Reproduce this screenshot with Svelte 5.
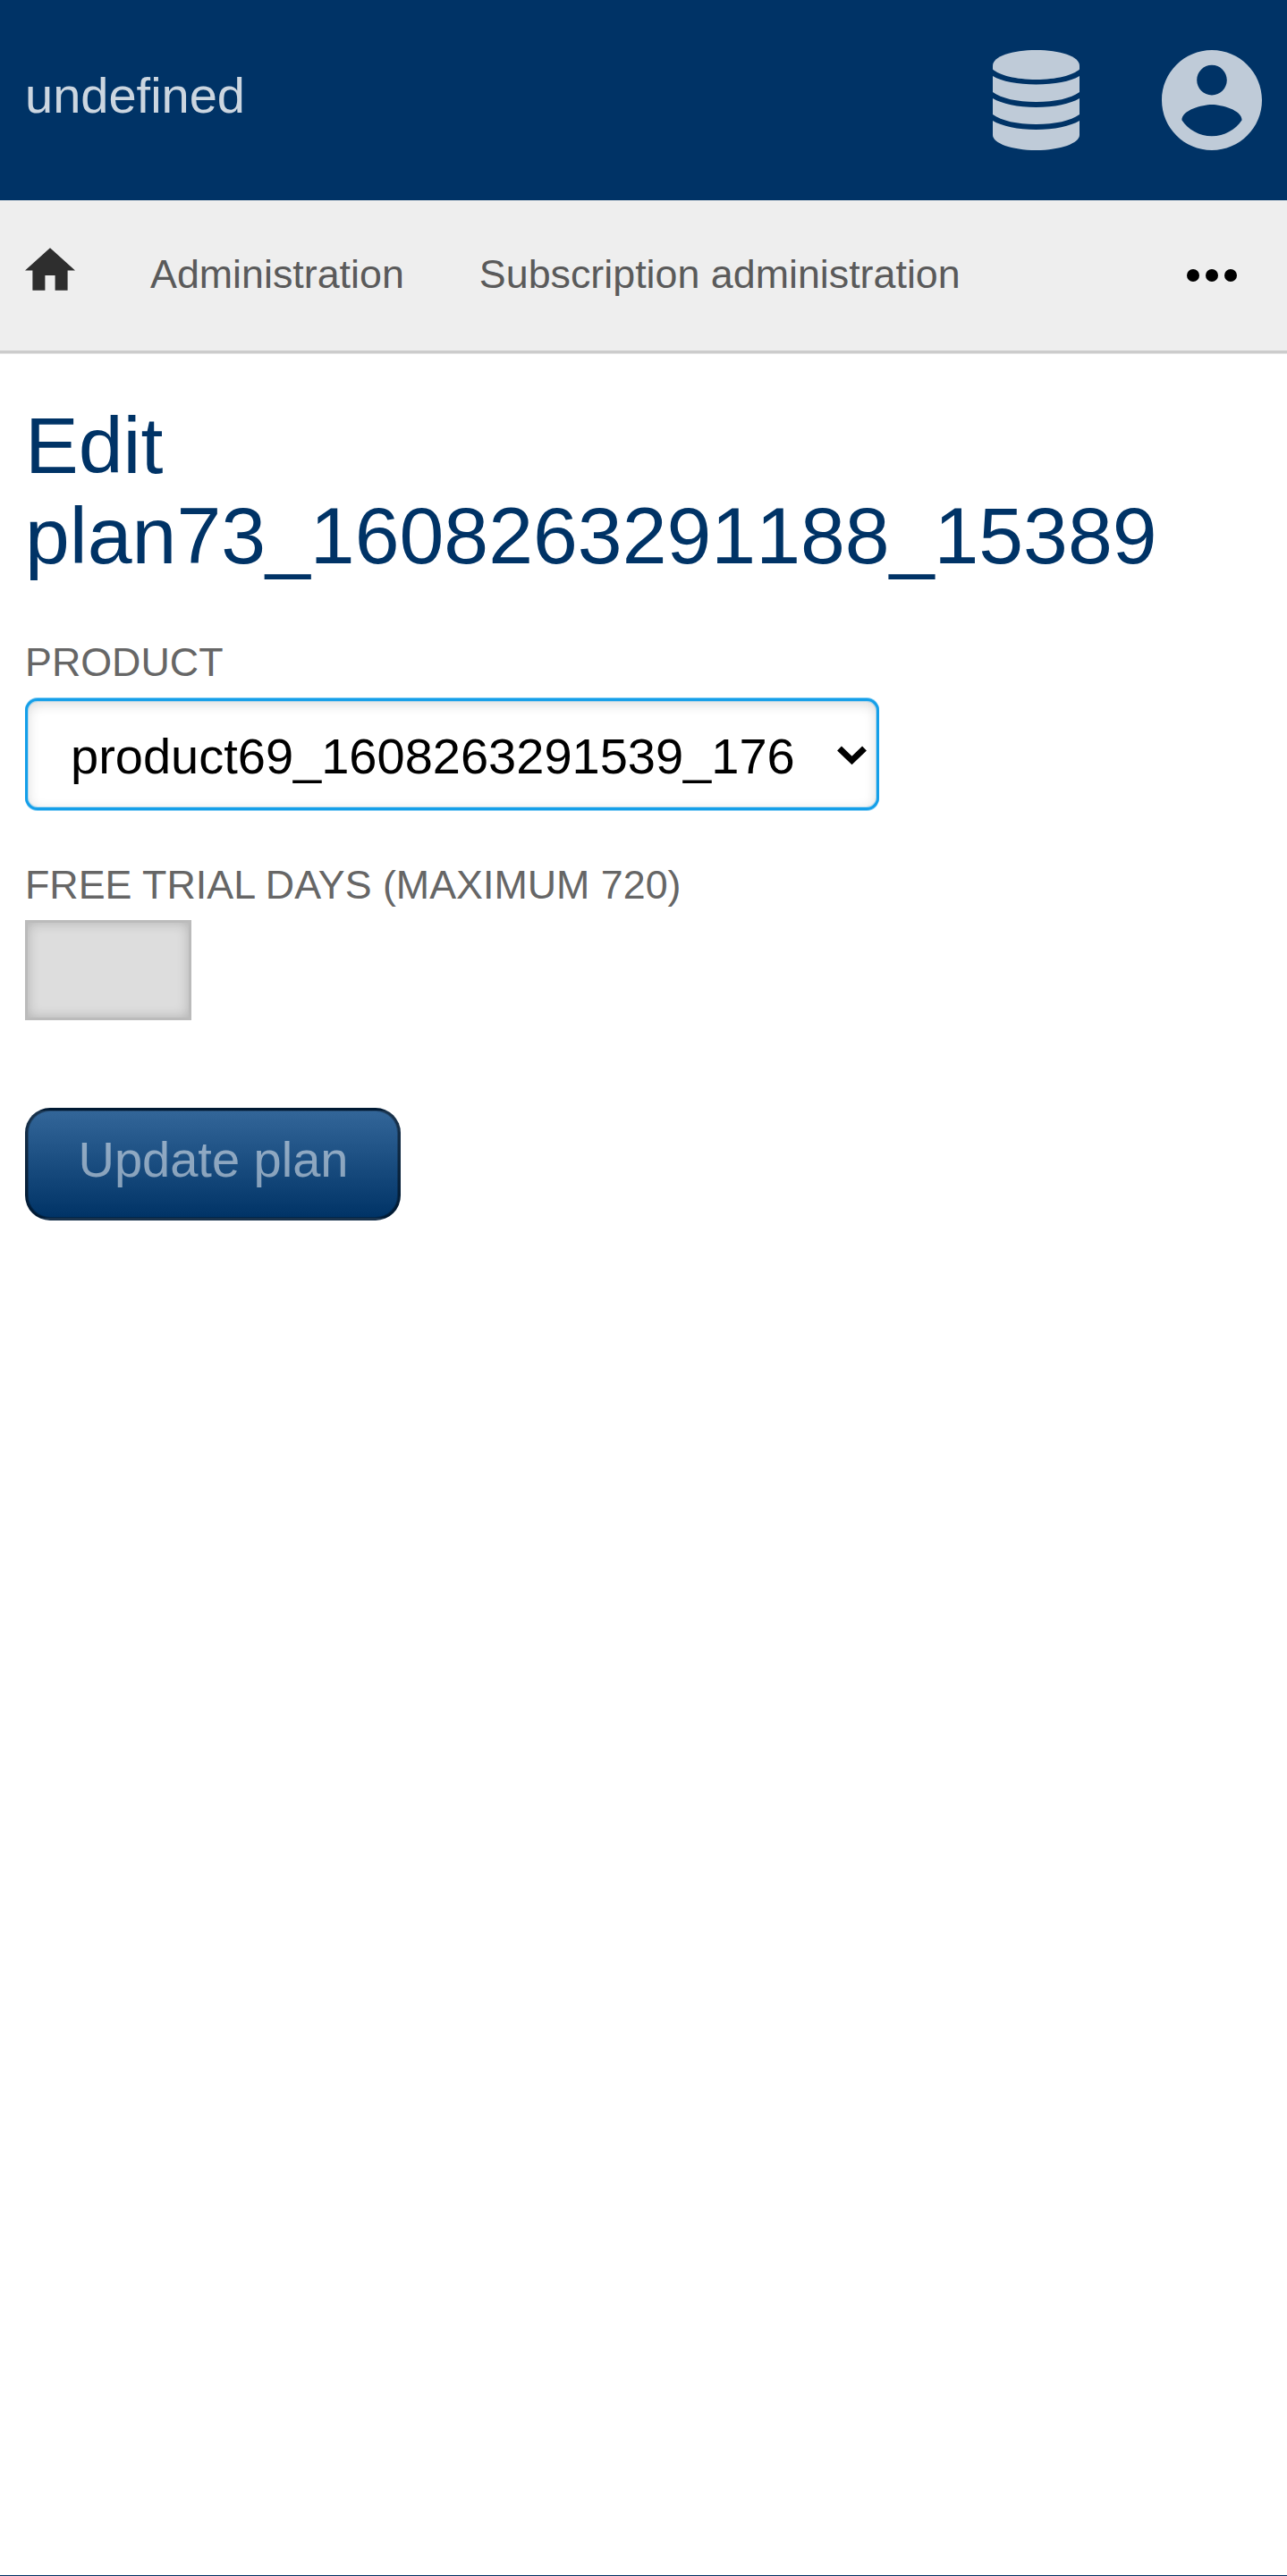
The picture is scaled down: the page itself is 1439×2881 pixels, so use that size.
<script>
  const crumbs = ['Administration', 'Subscription administration'];
  let product = $state('product69_1608263291539_176');
</script>

<div class="page">
  <header>
    <span class="brand">undefined</span>
    <div class="tools">
      <svg class="db" viewBox="0 0 97 112" aria-label="Database">
        <path d="M0 17.500C0 7 22 0 48.500 0S97 7 97 17.500V21.500C90 28 71 33 48.500 33S7 28 0 21.500Z" />
        <path d="M0 29C10 35 28 38.500 48.500 38.500S87 35 97 29V47C87 54 70 58 48.500 58S10 54 0 47Z" />
        <path d="M0 54C10 60 28 64 48.500 64S87 60 97 54V72C87 79 70 83 48.500 83S10 79 0 72Z" />
        <path d="M0 79C10 85 28 89 48.500 89S87 85 97 79V95C97 104 76 112 48.500 112S0 104 0 95Z" />
      </svg>
      <svg class="user" viewBox="2 2 20 20" aria-label="Account">
        <path d="M12 2C6.480 2 2 6.480 2 12s4.480 10 10 10 10-4.480 10-10S17.520 2 12 2zm0 3c1.660 0 3 1.340 3 3s-1.340 3-3 3-3-1.340-3-3 1.340-3 3-3zm0 14.200c-2.500 0-4.710-1.280-6-3.220.030-1.990 4-3.080 6-3.080 1.990 0 5.970 1.090 6 3.080-1.290 1.940-3.500 3.220-6 3.220z" />
      </svg>
    </div>
  </header>

  <nav>
    <svg class="home" viewBox="2 3 20 17" aria-label="Home">
      <path d="M10 20v-6h4v6h5v-8h3L12 3 2 12h3v8z" />
    </svg>
    {#each crumbs as crumb}
      <span class="crumb">{crumb}</span>
    {/each}
    <svg class="more" viewBox="0 0 56 14" aria-label="More">
      <circle cx="7" cy="7" r="7" />
      <circle cx="28" cy="7" r="7" />
      <circle cx="49" cy="7" r="7" />
    </svg>
  </nav>

  <main>
    <h1>Edit plan73_1608263291188_15389</h1>
    <label for="product">Product</label>
    <div class="select">
      <select id="product" bind:value={product}>
        <option>product69_1608263291539_176</option>
      </select>
      <svg class="caret" viewBox="0 0 33 22"><path d="M2.500 3 16.500 16.500 30.500 3" /></svg>
    </div>
    <label for="trial">Free trial days (maximum 720)</label>
    <input id="trial" disabled />
    <button disabled>Update plan</button>
  </main>
  <footer></footer>
</div>

<style>
  .page {
    display: flex;
    flex-direction: column;
    height: 2881px;
    overflow: hidden;
    background: #fff;
    font-family: "Liberation Sans", Arial, sans-serif;
    font-size: 56px;
  }
  svg { display: block; flex: none; }
  header {
    display: flex;
    justify-content: space-between;
    align-items: center;
    box-sizing: border-box;
    height: 224px;
    padding: 0 28px;
    background: #036;
    color: rgba(255, 255, 255, 0.8);
    flex: none;
  }
  .brand { padding-bottom: 11px; }
  .tools { display: flex; gap: 92px; fill: rgba(255, 255, 255, 0.75); }
  .db { width: 97px; height: 112px; }
  .user { width: 112px; height: 112px; }
  nav {
    display: flex;
    align-items: center;
    box-sizing: border-box;
    height: 171px;
    padding: 0 56px 0 28px;
    border-bottom: 3px solid #ccc;
    background: #eee;
    box-shadow: 0 1px #e6e6e6;
    color: #5a5a5a;
    font-size: 44.8px;
    flex: none;
  }
  .home { width: 56px; height: 48px; margin-bottom: 14px; fill: #2e2e2e; }
  .crumb { margin-left: 84px; padding-bottom: 3px; }
  .more { width: 56px; height: 14px; margin-left: auto; }
  main { display: flex; flex-direction: column; align-items: flex-start; padding: 53px 28px 0; flex: 1; }
  h1 {
    margin: 0 0 65px;
    color: #036;
    font-size: 89.6px;
    font-weight: 400;
    font-kerning: none;
    line-height: 101px;
  }
  label {
    color: #666;
    font-size: 44.8px;
    line-height: 51px;
    text-transform: uppercase;
  }
  .select { position: relative; margin: 15px 0 58px; }
  select {
    display: block;
    appearance: none;
    box-sizing: border-box;
    width: 955px;
    height: 125px;
    padding: 3px 0 0 48px;
    border: 3px solid #149fe9;
    border-radius: 14px;
    background: #fff;
    box-shadow:
      0 -1px rgba(20, 159, 233, 0.5),
      0 1px rgba(20, 159, 233, 0.5),
      inset 0 0 0 1px rgba(20, 159, 233, 0.25),
      inset 0 3.500px 14px rgba(0, 0, 0, 0.15);
    color: #000;
    font: 56px "Liberation Sans", Arial, sans-serif;
  }
  .caret {
    position: absolute;
    right: 14px;
    top: 53px;
    width: 33px;
    height: 22px;
    fill: none;
    stroke: #000;
    stroke-width: 7;
    pointer-events: none;
  }
  input {
    box-sizing: border-box;
    width: 186px;
    height: 112px;
    margin: 14px 0 98px;
    border: 3px solid #bbb;
    border-radius: 0;
    background: #ddd;
    box-shadow: inset 0 0 14px rgba(0, 0, 0, 0.2);
  }
  button {
    box-sizing: border-box;
    width: 420px;
    height: 126px;
    padding: 0 0 12px 1px;
    border: 3px solid rgba(0, 0, 0, 0.5);
    border-radius: 28px;
    background: linear-gradient(#369, #036);
    box-shadow: inset 0 0 0 1px rgba(0, 0, 0, 0.25);
    color: rgba(255, 255, 255, 0.5);
    font: 56px "Liberation Sans", Arial, sans-serif;
  }
  footer { height: 1px; background: #036; flex: none; }
  :global(body) { margin: 0; }
</style>
